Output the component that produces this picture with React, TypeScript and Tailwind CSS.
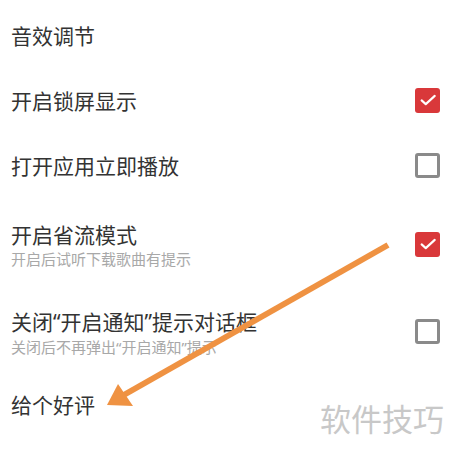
const font = { fontFamily: '"Noto Sans CJK SC", "Noto Sans", sans-serif' };

interface RowProps {
  title: React.ReactNode;
  sub?: React.ReactNode;
  checked?: boolean;
  height: string;
}

// curly quotes drawn narrow, like the original screen
function Q({ children }: { children: string }) {
  return <span style={{ fontFamily: '"Noto Sans", sans-serif' }}>{children}</span>;
}

function Checkbox({ checked }: { checked: boolean }) {
  if (checked) {
    return (
      <div className="w-[25px] h-[25px] rounded-[3px] bg-[#d9383a] flex items-center justify-center">
        <svg width="18" height="18" viewBox="0 0 24 24" fill="none" stroke="#fff" strokeWidth={2.8} strokeLinecap="round" strokeLinejoin="round">
          <path d="M3.5 12.5l5.5 5L21 6.5" />
        </svg>
      </div>
    );
  }
  return <div className="w-[25px] h-[25px] rounded-[3px] border-[3px] border-[#8a8a8a]" />;
}

function Row({ title, sub, checked, height }: RowProps) {
  return (
    <div className={`flex items-center justify-between pl-[11px] pr-[10px] ${height}`}>
      <div className="flex flex-col">
        <span className="text-[21px] leading-[30px] text-[#333]">{title}</span>
        {sub && <span className="text-[15px] leading-[20px] text-[#a8a8a8]">{sub}</span>}
      </div>
      {checked !== undefined && <Checkbox checked={checked} />}
    </div>
  );
}

export default function App() {
  return (
    <div className="relative w-[450px] h-[453px] bg-white overflow-hidden" style={font}>
      <div className="flex flex-col">
        <Row title="音效调节" height="h-[70px]" />
        <Row title="开启锁屏显示" checked height="h-[60px]" />
        <Row title="打开应用立即播放" checked={false} height="h-[70px]" />
        <Row title="开启省流模式" sub="开启后试听下载歌曲有提示" checked height="h-[88px]" />
        <Row
          title={<>关闭<Q>“</Q>开启通知<Q>”</Q>提示对话框</>}
          sub={<>关闭后不再弹出<Q>“</Q>开启通知<Q>”</Q>提示</>}
          checked={false}
          height="h-[86px]"
        />
        <Row title="给个好评" height="h-[60px]" />
      </div>

      {/* annotation arrow */}
      <svg className="absolute left-0 top-0" width="450" height="453" viewBox="0 0 450 453">
        <line x1="388" y1="245" x2="122" y2="396" stroke="#ef9242" strokeWidth="6" />
        <polygon points="107,405 118,384 133,406" fill="#ef9242" />
      </svg>

      <span className="absolute right-[6px] top-[398px] text-[31px] leading-[40px] text-[#c8c8c8]">软件技巧</span>
    </div>
  );
}
